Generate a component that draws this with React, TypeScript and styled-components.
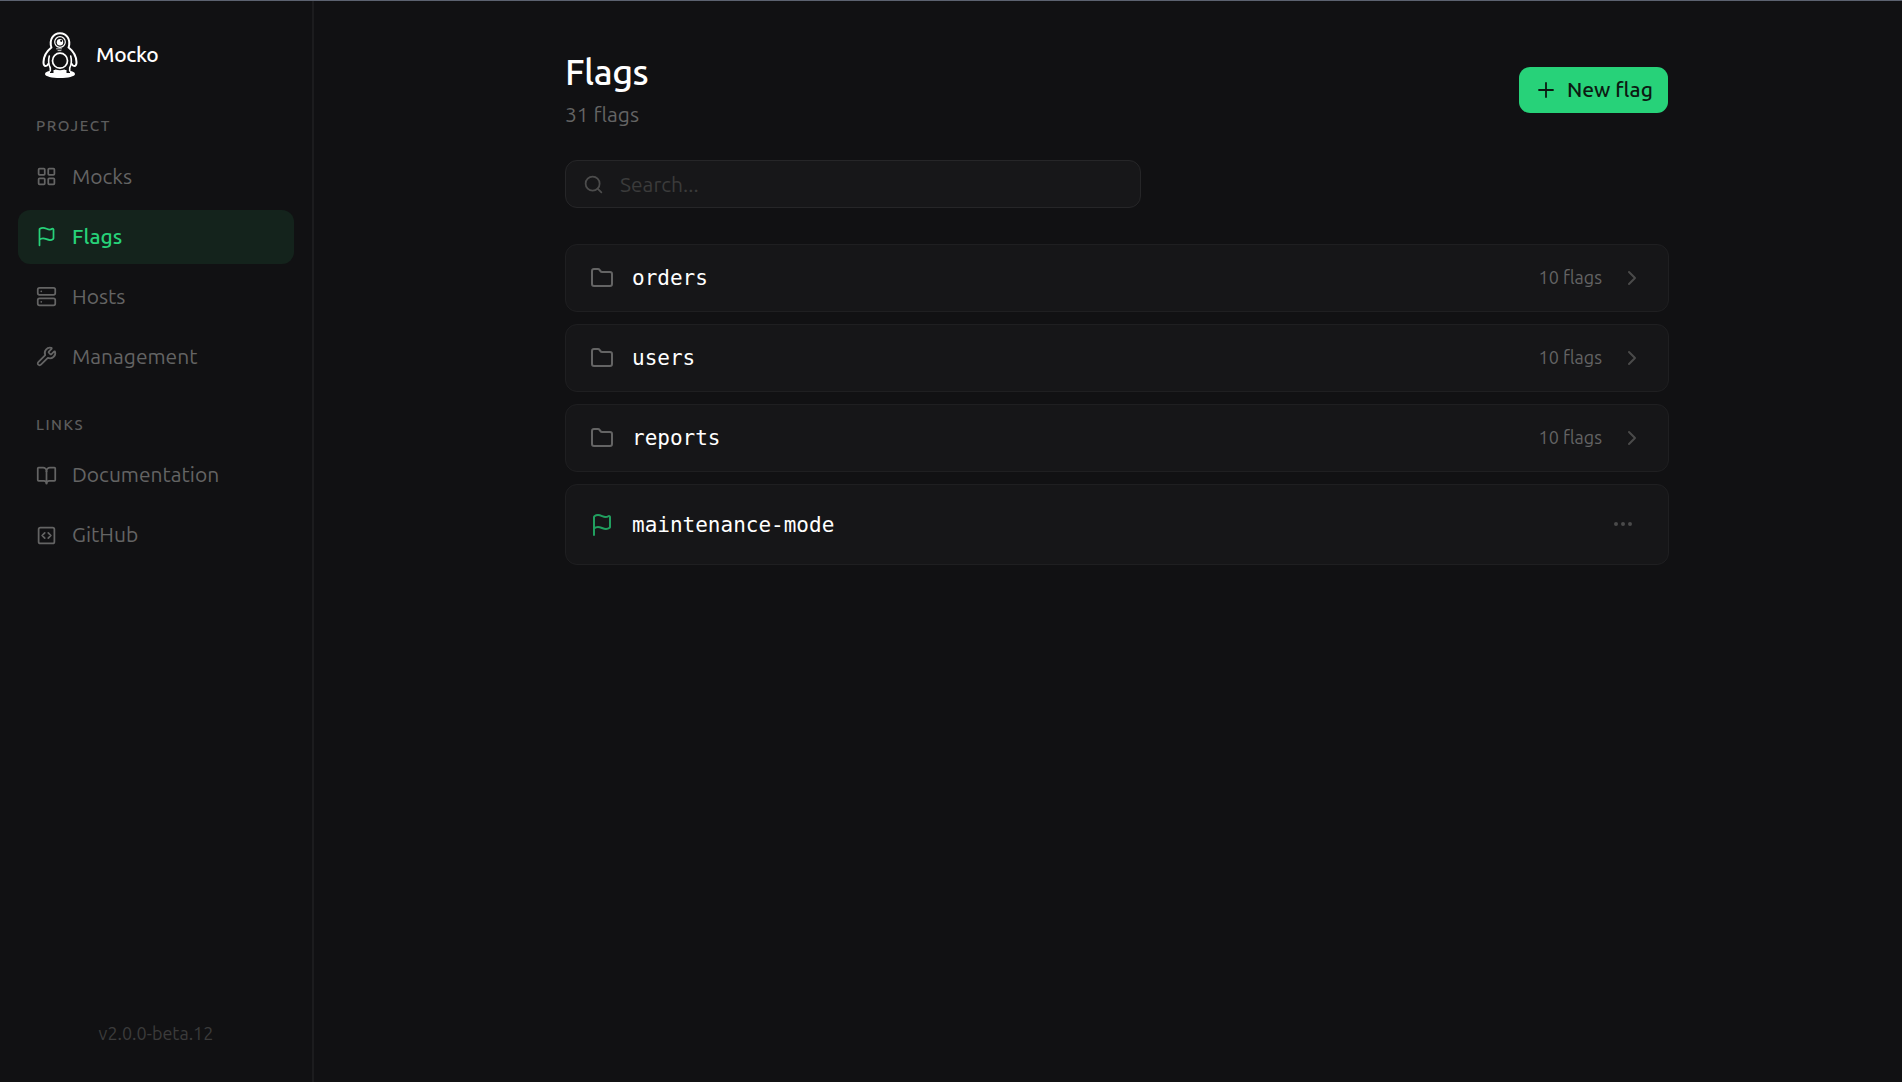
import React from "react";
import styled, { createGlobalStyle } from "styled-components";
import {
  LayoutGrid,
  Flag,
  Server,
  Wrench,
  BookOpen,
  Search,
  Plus,
  Folder,
  ChevronRight,
  Ellipsis,
  type LucideIcon,
} from "lucide-react";

const colors = {
  bg: "#111113",
  surface: "#161618",
  border: "#1f1f21",
  inputBorder: "#262628",
  muted: "#646464",
  faint: "#3b3b3b",
  green: "#27d279",
};

const fontStack = `Ubuntu, "Noto Sans", "Open Sans", sans-serif`;

const GlobalStyle = createGlobalStyle`
  * { box-sizing: border-box; }
  body {
    margin: 0;
    background: ${colors.bg};
    color: #fff;
    font-family: ${fontStack};
    overflow: hidden;
  }
`;

const Shell = styled.div`
  display: flex;
  height: 1082px;
  border-top: 1px solid #5c6270;
`;

const Sidebar = styled.aside`
  display: flex;
  flex-direction: column;
  flex: none;
  width: 314px;
  padding: 29px 18px 37px;
  border-right: 2px solid #1c1c1e;
`;

const Brand = styled.div`
  display: flex;
  align-items: center;
  height: 50px;
  padding-left: 24px;
  gap: 18px;
`;

const BrandName = styled.span`
  padding-bottom: 2px;
  font-size: 21px;
  font-weight: 500;
  letter-spacing: -0.3px;
`;

const SectionLabel = styled.h2<{ $top: number }>`
  margin: ${(p) => p.$top}px 0 0;
  padding-left: 18px;
  height: 20px;
  line-height: 20px;
  font-size: 15px;
  font-weight: 500;
  letter-spacing: 1.5px;
  color: #5c5c5c;
`;

const Nav = styled.nav<{ $top: number }>`
  display: flex;
  flex-direction: column;
  gap: 6px;
  margin-top: ${(p) => p.$top}px;
`;

const NavItem = styled.a<{ $active?: boolean }>`
  display: flex;
  align-items: center;
  gap: 15px;
  height: 54px;
  padding: 0 18px 2px;
  border-radius: 12px;
  font-size: 21px;
  font-weight: ${(p) => (p.$active ? 500 : 400)};
  color: ${(p) => (p.$active ? colors.green : colors.muted)};
  background: ${(p) => (p.$active ? "#14231c" : "transparent")};
`;

const NavIcon = styled.span<{ $drop: number }>`
  display: flex;
  padding-top: ${(p) => p.$drop}px;
`;

const Version = styled.div`
  margin-top: auto;
  text-align: center;
  font-size: 18px;
  line-height: 24px;
  color: ${colors.faint};
`;

const Main = styled.main`
  flex: 1;
  padding: 47px 233px 0 251px;
`;

const Header = styled.header`
  display: flex;
  align-items: center;
  justify-content: space-between;
  height: 81px;
`;

const Title = styled.h1`
  margin: 0;
  font-size: 36px;
  line-height: 48px;
  font-weight: 500;
  letter-spacing: -0.54px;
`;

const Subtitle = styled.p`
  margin: 3px 0 0;
  font-size: 21px;
  line-height: 30px;
  color: ${colors.muted};
`;

const PrimaryButton = styled.button`
  display: flex;
  align-items: center;
  gap: 9px;
  width: 149px;
  height: 46px;
  margin: 3px 1px 0 0;
  padding: 0 15px;
  border: 0;
  border-radius: 11px;
  background: ${colors.green};
  color: #0c1a12;
  font: 500 21px ${fontStack};
  white-space: nowrap;
`;

const ButtonText = styled.span`
  padding-bottom: 2px;
`;

const SearchBox = styled.label`
  display: flex;
  align-items: center;
  width: 576px;
  height: 48px;
  margin-top: 31px;
  padding: 0 17px;
  gap: 16px;
  border: 1px solid ${colors.inputBorder};
  border-radius: 12px;
  background: #171719;
  color: #4c4c4c;
`;

const SearchInput = styled.input`
  flex: 1;
  padding: 0;
  border: 0;
  outline: 0;
  background: transparent;
  font: 400 21px ${fontStack};
  &::placeholder { color: ${colors.faint}; }
`;

const List = styled.div`
  display: flex;
  flex-direction: column;
  gap: 12px;
  margin-top: 36px;
`;

const Row = styled.div<{ $tall?: boolean }>`
  display: flex;
  align-items: center;
  height: ${(p) => (p.$tall ? 81 : 68)}px;
  padding: 0 ${(p) => (p.$tall ? 33 : 24)}px 0 24px;
  border: 1px solid ${colors.border};
  border-radius: 12px;
  background: ${colors.surface};
`;

const RowIcon = styled.span<{ $green?: boolean }>`
  display: flex;
  color: ${(p) => (p.$green ? "#219f5f" : "#646464")};
`;

const RowName = styled.span`
  flex: 1;
  margin-left: 18px;
  font: 400 21px "DejaVu Sans Mono", monospace;
`;

const RowCount = styled.span`
  margin-right: 18px;
  padding-bottom: 2px;
  font-size: 18px;
  color: ${colors.muted};
`;

const RowAction = styled.span<{ $lift?: number }>`
  display: flex;
  padding-bottom: ${(p) => p.$lift ?? 0}px;
  color: #4a4a4a;
`;

const Logo = () => (
  <svg width="36" height="46" viewBox="0 0 36 46" fill="none" stroke="#fff" strokeLinecap="round">
    <path
      d="M9.400 15.500C7 8 11 1.200 18 1.200s11 6.800 8.600 14.300c4.500 3.500 7.700 9 7.900 14.500.1 2.500-.8 4-2.300 4-1.200 0-2-.8-2.400-2M9.400 15.500C4.900 19 1.700 24.500 1.500 30c-.1 2.500.8 4 2.300 4 1.200 0 2-.8 2.400-2"
      strokeWidth="2"
    />
    <path d="M7.300 24c-1.300 5-.6 9 1 12v3M28.700 24c1.300 5 .6 9-1 12v3" strokeWidth="1.600" />
    <circle cx="18" cy="10" r="5.300" strokeWidth="1.200" />
    <circle cx="18" cy="10.200" r="3.200" fill="#fff" stroke="none" />
    <circle cx="19.200" cy="8.800" r="1.100" fill="#111113" stroke="none" />
    <path d="M14.500 16.800h5M16 18.600h3" strokeWidth="1" opacity=".75" />
    <circle cx="18" cy="28.700" r="7.500" strokeWidth="1.700" />
    <path
      d="M3 42c0-1.800 2.500-2.800 5-3v2h3.500v-3c.8 0 1.500-.3 2-.6 2.800 1 6.200 1 9 0 .5.300 1.200.6 2 .6v3H28v-2c2.500.2 5 1.200 5 3 0 2.500-7 4-15 4S3 44.500 3 42z"
      fill="#fff"
      stroke="none"
    />
  </svg>
);

const SquareCode = ({ size = 24, strokeWidth = 2 }: { size?: number; strokeWidth?: number }) => (
  <svg
    width={size}
    height={size}
    viewBox="0 0 24 24"
    fill="none"
    stroke="currentColor"
    strokeWidth={strokeWidth}
    strokeLinecap="round"
    strokeLinejoin="round"
  >
    <rect x="3" y="3" width="18" height="18" rx="2" />
    <path d="m10 9-3 3 3 3M14 15l3-3-3-3" />
  </svg>
);

type NavEntry = {
  label: string;
  icon: LucideIcon | typeof SquareCode;
  active?: boolean;
};

const project: NavEntry[] = [
  { label: "Mocks", icon: LayoutGrid },
  { label: "Flags", icon: Flag, active: true },
  { label: "Hosts", icon: Server },
  { label: "Management", icon: Wrench },
];

const links: NavEntry[] = [
  { label: "Documentation", icon: BookOpen },
  { label: "GitHub", icon: SquareCode },
];

const NavList = ({ items, top, drop }: { items: NavEntry[]; top: number; drop: number }) => (
  <Nav $top={top}>
    {items.map(({ label, icon: Icon, active }) => (
      <NavItem key={label} $active={active}>
        <NavIcon $drop={drop}>
          <Icon size={21} strokeWidth={2} />
        </NavIcon>
        <span>{label}</span>
      </NavItem>
    ))}
  </Nav>
);

const folders = ["orders", "users", "reports"];

export default function App() {
  return (
    <>
      <GlobalStyle />
      <Shell>
        <Sidebar>
          <Brand>
            <Logo />
            <BrandName>Mocko</BrandName>
          </Brand>
          <SectionLabel $top={36}>PROJECT</SectionLabel>
          <NavList items={project} top={14} drop={1} />
          <SectionLabel $top={31}>LINKS</SectionLabel>
          <NavList items={links} top={13} drop={3} />
          <Version>v2.0.0-beta.12</Version>
        </Sidebar>
        <Main>
          <Header>
            <div>
              <Title>Flags</Title>
              <Subtitle>31 flags</Subtitle>
            </div>
            <PrimaryButton>
              <Plus size={24} strokeWidth={1.8} />
              <ButtonText>New flag</ButtonText>
            </PrimaryButton>
          </Header>
          <SearchBox>
            <Search size={21} strokeWidth={2} />
            <SearchInput placeholder="Search..." />
          </SearchBox>
          <List>
            {folders.map((name) => (
              <Row key={name}>
                <RowIcon>
                  <Folder size={24} strokeWidth={2} />
                </RowIcon>
                <RowName>{name}</RowName>
                <RowCount>10 flags</RowCount>
                <RowAction>
                  <ChevronRight size={24} strokeWidth={2} />
                </RowAction>
              </Row>
            ))}
            <Row $tall>
              <RowIcon $green>
                <Flag size={24} strokeWidth={2} />
              </RowIcon>
              <RowName>maintenance-mode</RowName>
              <RowAction $lift={1}>
                <Ellipsis size={24} />
              </RowAction>
            </Row>
          </List>
        </Main>
      </Shell>
    </>
  );
}
